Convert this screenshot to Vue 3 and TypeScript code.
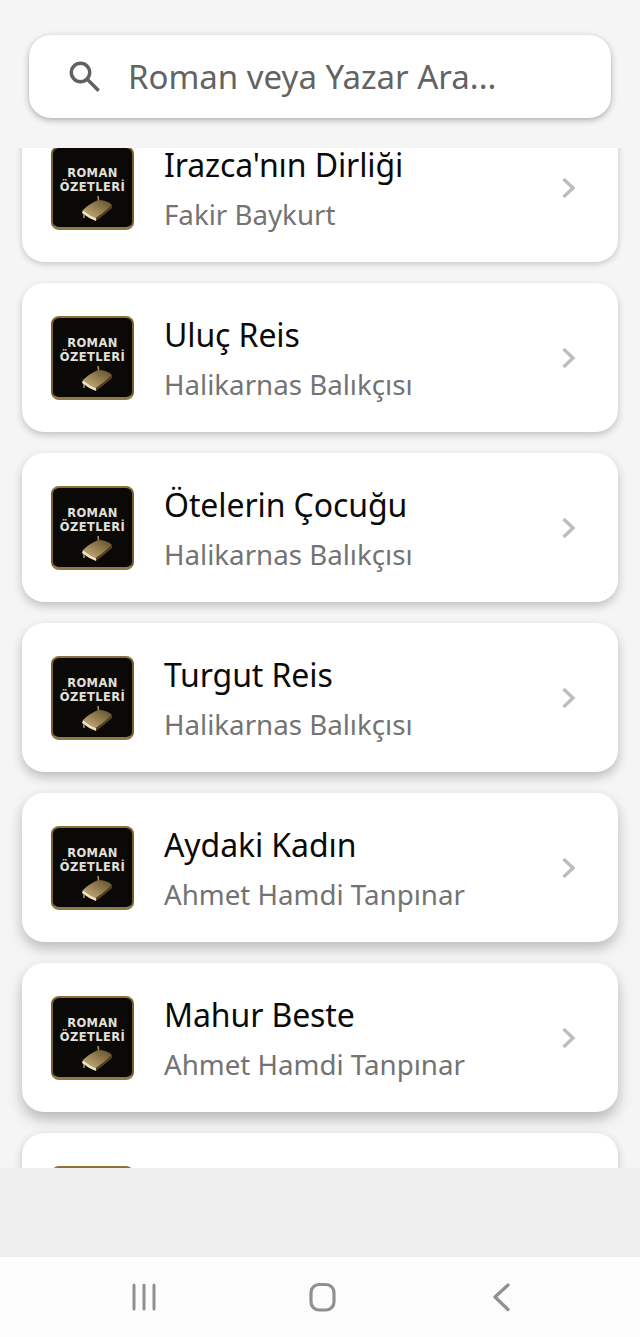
<script setup lang="ts">
type Novel = { title: string; author: string }

const novels: Novel[] = [
  { title: "Irazca'nın Dirliği", author: 'Fakir Baykurt' },
  { title: 'Uluç Reis', author: 'Halikarnas Balıkçısı' },
  { title: 'Ötelerin Çocuğu', author: 'Halikarnas Balıkçısı' },
  { title: 'Turgut Reis', author: 'Halikarnas Balıkçısı' },
  { title: 'Aydaki Kadın', author: 'Ahmet Hamdi Tanpınar' },
  { title: 'Mahur Beste', author: 'Ahmet Hamdi Tanpınar' },
]

// the shadows get heavier further down the list
function cardShadow(index: number) {
  return { boxShadow: `0 ${2 + index}px ${6 + index * 1.6}px rgba(0, 0, 0, ${0.2 + index * 0.012})` }
}
</script>

<template>
  <div class="screen">
    <div class="search-wrap">
      <div class="search">
        <svg class="search-icon" width="36" height="36" viewBox="0 0 36 36" fill="none" stroke="#616161" stroke-width="3.4">
          <circle cx="14.5" cy="14.5" r="9.2" />
          <path d="M21.5 21.5 L31.5 31.5" stroke-linecap="square" />
        </svg>
        <span class="search-text">Roman veya Yazar Ara...</span>
      </div>
    </div>

    <div class="list">
      <div class="list-inner">
        <div v-for="(novel, index) in novels" :key="novel.title" class="card" :style="cardShadow(index)">
          <div class="cover">
            <span class="cover-line">ROMAN</span>
            <span class="cover-line">ÖZETLERİ</span>
            <svg class="book" width="32" height="26" viewBox="0 0 32 26">
              <defs>
                <linearGradient id="bookTop" x1="0" y1="1" x2="1" y2="0">
                  <stop offset="0" stop-color="#cdb680" />
                  <stop offset="1" stop-color="#5f4b28" />
                </linearGradient>
              </defs>
              <path d="M2 14 Q8 8 17 4 Q26 4 31 9 Q24 16 15 22 Q8 19 2 14 Z" fill="url(#bookTop)" />
              <path d="M2 14 Q8 19 15 22 L15 25 Q7 22 1 17 Z" fill="#efe3c0" />
              <path d="M15 22 Q24 16 31 9 L31 12 Q23 19 15 25 Z" fill="#57421f" />
              <path d="M3 18 L3 22" stroke="#b9a677" stroke-width="1.4" />
              <path d="M17 0 L17.5 4" stroke="#a58c5c" stroke-width="1.6" />
            </svg>
          </div>
          <div class="info">
            <div class="title">{{ novel.title }}</div>
            <div class="author">{{ novel.author }}</div>
          </div>
          <svg class="chevron" width="16" height="22" viewBox="0 0 16 22" fill="none" stroke="#bdbdbd" stroke-width="3.4">
            <path d="M2.5 2 L12 11 L2.5 20" />
          </svg>
        </div>
        <!-- next row, only its top edge shows above the clip -->
        <div class="card">
          <div class="cover"></div>
        </div>
      </div>
    </div>

    <div class="footer-gap"></div>

    <nav class="navbar">
      <svg width="30" height="30" viewBox="0 0 30 30" fill="none" stroke="#909090" stroke-width="3" stroke-linecap="round">
        <path d="M5 3 V27 M15 3 V27 M25 3 V27" />
      </svg>
      <svg width="30" height="30" viewBox="0 0 30 30" fill="none" stroke="#909090" stroke-width="3.2">
        <rect x="3" y="2.5" width="23" height="25.5" rx="8" />
      </svg>
      <svg width="30" height="30" viewBox="0 0 30 30" fill="none" stroke="#909090" stroke-width="3.2" stroke-linecap="round" stroke-linejoin="round">
        <path d="M22 3 L9 15 L22 27.5" />
      </svg>
    </nav>
  </div>
</template>

<style>
html,
body {
  margin: 0;
  background: #f5f5f5;
}
</style>

<style scoped>
.screen {
  width: 640px;
  height: 1337px;
  display: flex;
  flex-direction: column;
  background: #f5f5f5;
  font-family: 'Noto Sans', 'Open Sans', sans-serif;
  overflow: hidden;
}

.search-wrap {
  height: 148px;
  box-sizing: border-box;
  padding: 35px 29px 0 29px;
  flex: none;
}

.search {
  height: 83px;
  display: flex;
  align-items: center;
  background: #fff;
  border-radius: 22px;
  box-shadow: 0 2px 6px rgba(0, 0, 0, 0.3);
}

.search-icon {
  margin-left: 37px;
  margin-top: -2px;
  flex: none;
}

.search-text {
  margin-left: 26px;
  font-size: 33px;
  color: #636363;
  white-space: nowrap;
}

.list {
  height: 1020px;
  overflow: hidden;
  flex: none;
}

.list-inner {
  margin-top: -35px;
  padding: 0 22px;
  display: flex;
  flex-direction: column;
  gap: 21px;
}

.card {
  height: 149px;
  flex: none;
  display: flex;
  align-items: center;
  background: #fff;
  border-radius: 22px;
  box-shadow: 0 3px 8px rgba(0, 0, 0, 0.22);
}

.cover {
  width: 83px;
  height: 84px;
  box-sizing: border-box;
  margin-left: 29px;
  flex: none;
  display: flex;
  flex-direction: column;
  align-items: center;
  padding-top: 18px;
  background: #0b0907;
  border: 2px solid #75602f;
  border-top-color: #8a7238;
  border-bottom: 3px solid #8f7a45;
  border-radius: 8px;
  font-family: 'DejaVu Sans', sans-serif;
}

.cover-line {
  font-size: 11.5px;
  line-height: 14px;
  font-weight: 700;
  color: #e3e0da;
  letter-spacing: 0.4px;
  white-space: nowrap;
}

.book {
  margin-top: 2px;
  margin-left: 8px;
}

.info {
  margin-left: 30px;
  flex: 1;
  min-width: 0;
}

.title {
  font-size: 32px;
  line-height: 44px;
  color: #0a0a0a;
  letter-spacing: -0.1px;
  margin-top: 1px;
}

.author {
  font-size: 27.7px;
  line-height: 38px;
  color: #737373;
  margin-top: 8px;
}

.chevron {
  margin-right: 41px;
  flex: none;
}

.footer-gap {
  height: 89px;
  flex: none;
  background: #efefef;
}

.navbar {
  flex: 1;
  display: flex;
  align-items: center;
  justify-content: space-between;
  padding: 0 124px 0 129px;
  background: #fcfcfc;
}
</style>
